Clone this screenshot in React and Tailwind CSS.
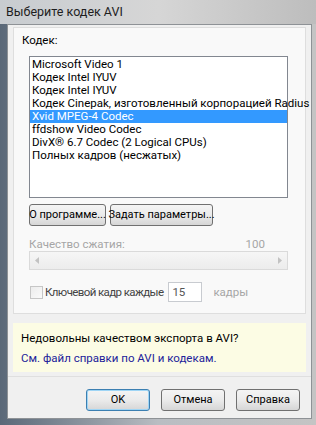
import React from "react";

const items = [
  "Microsoft Video 1",
  "Кодек Intel IYUV",
  "Кодек Intel IYUV",
  "Кодек Cinepak, изготовленный корпорацией Radius",
  "Xvid MPEG-4 Codec",
  "ffdshow Video Codec",
  "DivX® 6.7 Codec (2 Logical CPUs)",
  "Полных кадров (несжатых)",
];

function Btn({ children, className = "", def = false }) {
  return (
    <div
      className={
        "h-[22px] flex items-center justify-center whitespace-nowrap rounded-[3px] border bg-gradient-to-b from-[#f4f4f4] via-[#ebebeb] to-[#d6d6d6] text-[11px] leading-[14px] text-black " +
        (def ? "border-[#3c7fb1] shadow-[inset_0_0_0_1px_#9fd5f5] " : "border-[#707070] ") +
        className
      }
    >
      {children}
    </div>
  );
}

export default function App() {
  return (
    <div
      className="w-[316px] h-[425px] flex flex-col bg-gradient-to-r from-[#5a6878] via-[#b9bdc2] to-[#c4c4c4]"
      style={{ fontFamily: 'Roboto, "Noto Sans", sans-serif' }}
    >
      <div className="h-[24px] flex items-center pl-[6px] text-[12.5px] text-[#1e1e1e] bg-gradient-to-r from-[#c8ccd0] via-[#d6d6d6] to-[#bdbdbd]">
        Выберите кодек AVI
      </div>
      <div className="flex-1 ml-[7px] mr-[4px] mb-[6px] bg-[#f0f0f0] border border-[#8e9296] flex flex-col">
        <div className="mt-[2px] mx-[5px] h-[287px] bg-[#f9f9f9] border border-[#dedede] flex flex-col">
          <div className="pl-[8px] mt-[4px] leading-[16px] text-[11.5px] text-black">Кодек:</div>
          <div className="pl-[15px] pr-[17px] flex flex-col">
            <div className="mt-[8px] h-[142px] bg-white border border-[#828790] pt-[1px] flex flex-col">
              {items.map((t, i) => (
                <div
                  key={i}
                  className={
                    "h-[13px] leading-[13px] pl-[2px] text-[11.5px] whitespace-nowrap " +
                    (i === 4 ? "bg-[#3399ff] text-white" : "text-black")
                  }
                >
                  {t}
                </div>
              ))}
            </div>
            <div className="mt-[6px] flex gap-[4px]">
              <Btn className="w-[77px]">О программе...</Btn>
              <Btn className="w-[103px]">Задать параметры...</Btn>
            </div>
            <div className="mt-[11px] h-[14px] leading-[14px] flex justify-between text-[11.5px] text-[#a6a6a6] pr-[23px]">
              <span>Качество сжатия:</span>
              <span>100</span>
            </div>
            <div className="h-[19px] border border-[#dadada] bg-gradient-to-b from-[#f6f6f6] to-[#ececec] flex items-center justify-between px-[5px]">
              <svg width="4" height="7" viewBox="0 0 4 7"><path d="M4 0 L0 3.5 L4 7 Z" fill="#c2c2c2" /></svg>
              <svg width="4" height="7" viewBox="0 0 4 7"><path d="M0 0 L4 3.5 L0 7 Z" fill="#c2c2c2" /></svg>
            </div>
            <div className="mt-[12px] h-[20px] flex items-center text-[11.5px] leading-[14px]">
              <div className="ml-[1px] w-[13px] h-[13px] border border-[#c6c6c6] bg-gradient-to-br from-[#ececec] to-[#fafafa]" />
              <span className="ml-[2px] text-[#444] tracking-[-0.6px]">Ключевой кадр каждые</span>
              <div className="ml-[5px] w-[34px] h-[20px] bg-white border border-[#c8cbd0] flex items-center pl-[3px] text-[#555]">15</div>
              <span className="ml-[11px] text-[#a6a6a6]">кадры</span>
            </div>
          </div>
        </div>
        <div className="mt-[9px] mx-[5px] h-[49px] bg-[#fcfce4] pl-[8px] flex flex-col text-[11.5px]">
          <div className="mt-[7px] leading-[16px] text-black">Недовольны качеством экспорта в AVI?</div>
          <div className="mt-[4px] leading-[16px] text-[#22229a]">См. файл справки по AVI и кодекам.</div>
        </div>
        <div className="mt-[4px] border-t border-[#dfdfdf]" />
        <div className="mt-[12px] flex justify-end gap-[11px] pr-[11px]">
          <Btn def className="w-[64px]">OK</Btn>
          <Btn className="w-[64px]">Отмена</Btn>
          <Btn className="w-[64px]">Справка</Btn>
        </div>
      </div>
    </div>
  );
}
